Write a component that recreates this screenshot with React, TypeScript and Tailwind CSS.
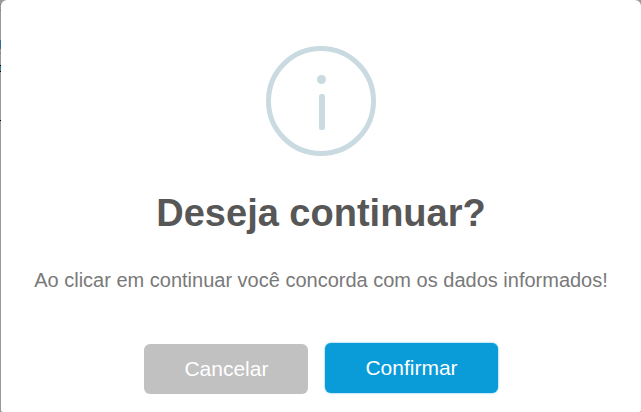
interface SliceProps {
  className: string;
}

// what is left visible of the dimmed page at the side of the dialog
const pageSlices = [
  'h-1 bg-[#999999]',
  'h-px bg-[#7d7d7d]',
  'h-[5px] bg-[#999999]',
  'h-px bg-[#7d7d7d]',
  'h-[29px] bg-[#999999]',
  'h-[9px] bg-[#2d6ca0]',
  'h-1 bg-[#999999]',
  'h-px bg-[#7d7d7d]',
  'h-[11px] bg-[#999999]',
  'h-px bg-black',
  'h-[5px] bg-[#3a7c95]',
  'h-px bg-black',
  'h-12 bg-[#999999]',
  'h-px bg-black',
];

function Slice({ className }: SliceProps) {
  return <div className={className} />;
}

function InfoIcon() {
  return (
    <svg width="110" height="110" viewBox="0 0 110 110" fill="none" aria-hidden="true">
      <circle cx="55" cy="55" r="52.5" stroke="#c9dae1" strokeWidth="5" />
      <circle cx="55.5" cy="33.5" r="4.5" fill="#c9dae1" />
      <rect x="53" y="48" width="6" height="36" rx="2.5" fill="#c9dae1" />
    </svg>
  );
}

export default function App() {
  return (
    <div className="flex min-h-screen bg-[#999999] font-['Liberation_Sans',Arial,sans-serif]">
      <div className="w-px shrink-0" aria-hidden="true">
        {pageSlices.map((slice, index) => (
          <Slice key={index} className={slice} />
        ))}
      </div>

      <div
        role="dialog"
        aria-labelledby="dialog-title"
        aria-describedby="dialog-text"
        className="flex flex-1 flex-col items-center rounded-t-md rounded-b-xs bg-white px-6 pt-[46px] pb-4 text-center"
      >
        <InfoIcon />
        <h2 id="dialog-title" className="mt-8 text-[38px] leading-[50px] font-bold text-[#575757]">
          Deseja continuar?
        </h2>
        <p id="dialog-text" className="mt-7 text-[20px] leading-7 text-[#797979]">
          Ao clicar em continuar você concorda com os dados informados!
        </p>
        <div className="mt-[49px] flex justify-center gap-[17px]">
          <button
            type="button"
            className="mt-px h-[50px] rounded-md bg-[#c1c1c1] px-10 text-[21px] leading-7 text-white"
          >
            Cancelar
          </button>
          <button
            type="button"
            className="h-[50px] rounded-md bg-[#0a9bd9] px-10 text-[21px] leading-7 text-white shadow-[0_0_2px_#0a9bd9cc]"
          >
            Confirmar
          </button>
        </div>
      </div>
    </div>
  );
}
